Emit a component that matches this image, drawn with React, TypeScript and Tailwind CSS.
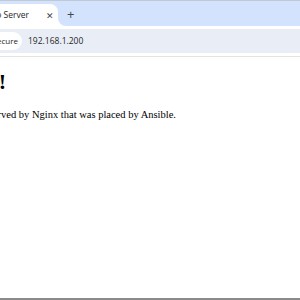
import React from "react";

const Tab = () => {
  return (
    <div className="relative w-[58px] h-[22px] bg-white rounded-tr-[8px] flex items-center">
      <div className="w-[29px] flex justify-end overflow-hidden whitespace-nowrap">
        <span className="text-[8.5px] text-[#1f1f1f]">Ansible Demo Server</span>
      </div>
      <span className="ml-[17px] text-[9px] text-[#474747] leading-none">✕</span>
      <div className="absolute -right-[8px] bottom-0 w-[8px] h-[8px] bg-white">
        <div className="w-full h-full bg-[#d3e3fd] rounded-bl-[8px]" />
      </div>
    </div>
  );
};

export default function App() {
  return (
    <div
      className="w-[300px] h-[300px] bg-white overflow-hidden flex flex-col"
      style={{ fontFamily: "'Open Sans', 'Noto Sans', sans-serif" }}
    >
      <div className="h-[1px] bg-[#c2c8d0]" />
      <div className="h-[25px] bg-[#d3e3fd] flex items-end">
        <Tab />
        <span className="ml-[9px] mb-[5px] text-[13px] leading-none text-[#474747]">+</span>
      </div>
      <div className="h-[30px] bg-white flex items-center">
        <div className="flex-1 h-[24px] bg-[#e9eef6] flex items-center">
          <div className="w-[22px] h-[18px] bg-white rounded-r-full flex items-center justify-end pr-[4px] overflow-hidden whitespace-nowrap">
            <span className="text-[8px] text-[#1f1f1f]">Not secure</span>
          </div>
          <span className="ml-[6px] text-[8.5px] text-[#1f1f1f]">192.168.1.200</span>
        </div>
      </div>
      <div className="h-[1px] bg-[#e3e3e3]" />
      <div className="flex-1 overflow-hidden" style={{ fontFamily: "'Liberation Serif', serif" }}>
        <div className="pt-[14px] text-black whitespace-nowrap">
          <div className="w-[6px] flex justify-end overflow-hidden">
            <h1 className="text-[22px] font-bold leading-none">Hello World!</h1>
          </div>
          <div className="mt-[14px] w-[176px] flex justify-end overflow-hidden">
            <p className="text-[10.5px]">This is a page served by Nginx that was placed by Ansible.</p>
          </div>
        </div>
      </div>
      <div className="h-[2px] bg-[#8a8a8a]" />
    </div>
  );
}
